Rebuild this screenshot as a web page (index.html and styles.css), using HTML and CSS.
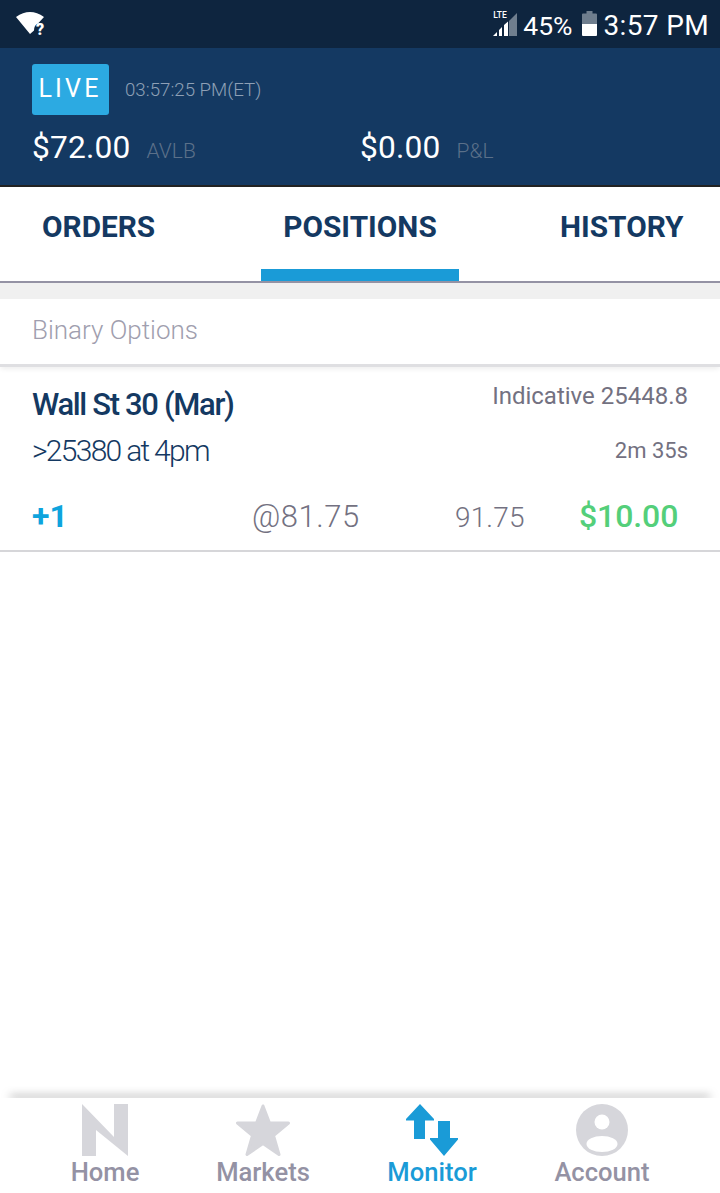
FILE: index.html
```html
<!DOCTYPE html>
<html lang="en">
<head>
<meta charset="utf-8">
<title>Positions</title>
<link rel="stylesheet" href="styles.css">
</head>
<body>
<div class="app">
  <div class="statusbar">
    <svg class="wifi" width="30" height="26" viewBox="0 0 30 26">
      <path fill="#fff" d="M1 7Q15 -3 29 7L23 13.500Q19 15 19 20.500L15 24Z"/>
    </svg>
    <span class="wifi-q">?</span>
    <div class="status-right">
      <div class="signal">
        <span class="lte">LTE</span>
        <svg width="24" height="23" viewBox="0 0 24 23">
          <path fill="#6f7e8e" d="M24 0V23H16V8Z"/>
          <path fill="#fff" d="M0 23L4 19V23ZM6 23V17L9 14V23ZM11 23V12L15 8.500V23Z"/>
        </svg>
      </div>
      <span class="pct">45%</span>
      <svg class="battery" width="15" height="25" viewBox="0 0 15 25">
        <path fill="#6f7e8e" d="M4.500 0H10.500V2.500H14A1 1 0 0 1 15 3.500V13H0V3.500A1 1 0 0 1 1 2.500H4.500Z"/>
        <path fill="#fff" d="M0 13H15V24A1 1 0 0 1 14 25H1A1 1 0 0 1 0 24Z"/>
      </svg>
      <span class="clock">3:57 PM</span>
    </div>
  </div>

  <header class="account">
    <div class="account-top">
      <span class="live">LIVE</span>
      <span class="servertime">03:57:25 PM(ET)</span>
    </div>
    <div class="balances">
      <div class="balance balance-avlb"><span class="amount">$72.00</span><span class="caption">AVLB</span></div>
      <div class="balance"><span class="amount">$0.00</span><span class="caption">P&amp;L</span></div>
    </div>
  </header>

  <nav class="tabs">
    <a class="tab tab-orders">ORDERS</a>
    <a class="tab tab-positions is-active">POSITIONS</a>
    <a class="tab tab-history">HISTORY</a>
  </nav>

  <div class="strip"></div>
  <div class="section-title">Binary Options</div>

  <section class="position">
    <div class="pos-line pos-line-1">
      <span class="instrument">Wall St 30 (Mar)</span>
      <span class="indicative">Indicative 25448.8</span>
    </div>
    <div class="pos-line pos-line-2">
      <span class="strike">&gt;25380 at 4pm</span>
      <span class="remaining">2m 35s</span>
    </div>
    <div class="pos-figures">
      <span class="qty">+1</span>
      <span class="entry">@81.75</span>
      <span class="last">91.75</span>
      <span class="pnl">$10.00</span>
    </div>
  </section>

  <main class="empty"></main>

  <footer class="bottomnav">
    <a class="navitem">
      <svg width="46" height="52" viewBox="0 0 46 52"><path fill="#d6d6db" d="M0 0L32 33V0H46V52L14 26V52H0Z"/></svg>
      <span>Home</span>
    </a>
    <a class="navitem">
      <svg width="54" height="52" viewBox="0 0 54 52"><path fill="#d6d6db" stroke="#d6d6db" stroke-width="3" stroke-linejoin="round" d="M27 2L33.500 19H52.500L37.500 31.500 43 50.500 27 39.500 11 50.500 16.500 31.500 1.500 19H20.500Z"/></svg>
      <span>Markets</span>
    </a>
    <a class="navitem is-active">
      <svg width="52" height="52" viewBox="0 0 52 52"><path fill="#1a9bd7" d="M14 0L28 15V16.500H19V35H8V16.500H0V15ZM32 17H44V34H52V35.500L38 52 24 35.500V34H32Z"/></svg>
      <span>Monitor</span>
    </a>
    <a class="navitem">
      <svg width="52" height="52" viewBox="0 0 52 52">
        <circle cx="26" cy="26" r="26" fill="#d6d6db"/>
        <circle cx="26" cy="18" r="7.500" fill="#fff"/>
        <ellipse cx="26" cy="40" rx="15.500" ry="8" fill="#fff"/>
      </svg>
      <span>Account</span>
    </a>
  </footer>
</div>
</body>
</html>
```

FILE: styles.css
```css
* { box-sizing: border-box; }

html, body {
  margin: 0;
  padding: 0;
  background: #fff;
}

body {
  font-family: Roboto, "Liberation Sans", sans-serif;
}

.app {
  width: 720px;
  height: 1193px;
  display: flex;
  flex-direction: column;
  overflow: hidden;
}

/* Device status bar */
.statusbar {
  height: 48px;
  flex: none;
  background: #0e253f;
  color: #fff;
  display: flex;
  align-items: center;
  padding: 0 11px 0 15px;
  position: relative;
}

.wifi { display: block; margin-top: -3px; }

.wifi-q {
  position: absolute;
  left: 36px;
  top: 22px;
  font-size: 16px;
  line-height: 16px;
  font-weight: 900;
}

.status-right {
  margin-left: auto;
  display: flex;
  align-items: center;
}

.signal { position: relative; width: 24px; height: 23px; margin-top: 1px; }
.signal svg { display: block; }

.lte {
  position: absolute;
  left: 0;
  top: -2px;
  font-size: 8.500px;
  line-height: 9px;
  font-weight: 500;
}

.pct { font-size: 26.500px; margin-left: 6px; margin-top: 4px; line-height: 40px; }
.battery { margin-left: 9px; margin-top: -1px; display: block; }
.clock { font-size: 28px; margin-left: 7px; margin-top: 4px; letter-spacing: .35px; line-height: 40px; }

/* Account summary */
.account {
  height: 139px;
  flex: none;
  background: #143962;
  border-bottom: 2px solid #222;
  padding: 16px 0 0 32px;
}

.account-top { display: flex; align-items: center; height: 51px; }

.live {
  width: 77px;
  height: 51px;
  background: #2caae2;
  border-radius: 3px;
  color: #fff;
  font-size: 25px;
  letter-spacing: 3.200px;
  line-height: 49px;
  text-align: center;
  padding-right: 1px;
}

.servertime {
  margin-left: 16px;
  font-size: 18.700px;
  font-weight: 300;
  color: #8ea0b6;
}

.balances { display: flex; margin-top: 13px; }
.balance { display: flex; align-items: baseline; }
.balance-avlb { width: 328px; }
.amount { font-size: 31.700px; color: #fff; line-height: 40px; letter-spacing: .2px; }
.caption { font-size: 21px; font-weight: 300; color: #5b7089; margin-left: 16px; }

/* Tab row */
.tabs {
  height: 96px;
  flex: none;
  border-bottom: 2px solid #9492a4;
  display: flex;
}

.tab {
  font-size: 29.800px;
  font-weight: 700;
  color: #143962;
  line-height: 80px;
  height: 94px;
}

.tab-orders { margin-left: 42px; width: 114px; }
.tab-positions {
  margin-left: 105px;
  width: 198px;
  text-align: center;
}
.tab-history { margin-left: 101px; }
.tab.is-active { border-bottom: 12px solid #1a9bd7; }

/* Section header */
.strip { height: 16px; flex: none; background: #f0f0f0; }

.section-title {
  height: 68px;
  flex: none;
  padding-left: 32px;
  font-size: 26px;
  font-weight: 300;
  color: #a09eae;
  line-height: 63px;
  background: #fff;
  border-bottom: 3px solid #dfdfe2;
  box-shadow: 0 3px 5px -1px rgba(0, 0, 0, .07);
}

/* Open position row */
.position {
  height: 185px;
  flex: none;
  border-bottom: 2px solid #d6d6d9;
  padding: 1px 32px 0;
}

.pos-line { display: flex; justify-content: space-between; align-items: flex-start; }
.pos-line-1 { height: 58px; }
.pos-line-2 { height: 48px; }

.instrument { font-size: 31px; font-weight: 500; color: #143962; letter-spacing: -1.350px; line-height: 40px; margin-top: 17px; }
.indicative { font-size: 24px; color: #737181; line-height: 28px; margin-top: 14px; }
.strike { font-size: 30px; font-weight: 300; color: #143962; letter-spacing: -1.700px; line-height: 40px; margin-top: 5px; }
.remaining { font-size: 22px; color: #737181; line-height: 26px; margin-top: 12px; }

.pos-figures {
  display: grid;
  grid-template-columns: 220px 203px 124px 1fr;
  align-items: baseline;
  padding-top: 22px;
  line-height: 40px;
}

.qty { font-size: 32px; font-weight: 700; color: #0ea4dd; }
.entry { font-size: 31px; font-weight: 300; color: #737181; letter-spacing: .55px; }
.last { font-size: 28px; font-weight: 300; color: #737181; letter-spacing: .15px; align-self: start; margin-top: 2px; }
.pnl { font-size: 32px; font-weight: 500; color: #54cf7a; letter-spacing: -.1px; }

.empty { flex: 1; }

/* Bottom navigation */
.bottomnav {
  height: 95px;
  flex: none;
  background: #fff;
  position: relative;
  display: grid;
  grid-template-columns: 210px 106px 232px 108px;
  justify-items: center;
  padding-top: 6px;
}

/* Shadow cast upward only; the clip keeps it off the white bar */
.bottomnav::before {
  content: "";
  position: absolute;
  left: 10px;
  right: 10px;
  top: 0;
  height: 2px;
  box-shadow: 0 -2px 8px rgba(0, 0, 0, .62);
  clip-path: inset(-14px -14px 2px -14px);
}

.navitem {
  display: flex;
  flex-direction: column;
  align-items: center;
  font-size: 25.600px;
  font-weight: 500;
  color: #9492a4;
  height: 83px;
}

.navitem svg { display: block; flex: none; }
.navitem span { line-height: 30px; margin-top: 1px; white-space: nowrap; }
.navitem.is-active { color: #1a9bd7; }
```
